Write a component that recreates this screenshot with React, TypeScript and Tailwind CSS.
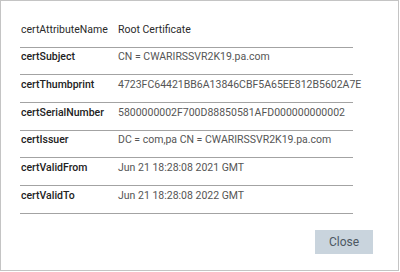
const rows: [string, string][] = [
  ["certSubject", "CN = CWARIRSSVR2K19.pa.com"],
  ["certThumbprint", "4723FC64421BB6A13846CBF5A65EE812B5602A7E"],
  ["certSerialNumber", "5800000002F700D88850581AFD000000000002"],
  ["certIssuer", "DC = com,pa CN = CWARIRSSVR2K19.pa.com"],
  ["certValidFrom", "Jun 21 18:28:08 2021 GMT"],
  ["certValidTo", "Jun 21 18:28:08 2022 GMT"],
];

export default function App() {
  return (
    <div
      className="flex h-[271px] w-[399px] flex-col border border-[#c4c4c4] bg-white"
      style={{ fontFamily: "Roboto, 'Noto Sans', sans-serif" }}
    >
      <div className="ml-[19px] mt-[19px] w-[333px]">
        <div className="flex h-[27.7px] border-b border-[#a3a3a3] pl-px pt-[2px] text-[10.5px] leading-[15px] text-[#2a2a2a]">
          <div className="w-[97px] shrink-0">certAttributeName</div>
          <div className="whitespace-nowrap">Root Certificate</div>
        </div>
        {rows.map(([name, value]) => (
          <div
            key={name}
            className="flex h-[27.7px] border-b border-[#a3a3a3] pl-px pt-[1.5px] text-[10.5px] leading-[15px]"
          >
            <div className="w-[97px] shrink-0 font-medium text-[#222]">{name}</div>
            <div className="whitespace-nowrap text-[#555]">{value}</div>
          </div>
        ))}
      </div>
      <div className="mt-auto mb-[16px] mr-[25px] flex justify-end">
        <button
          type="button"
          className="h-[24px] w-[58px] bg-[#c9d4dd] text-[12px] text-[#4d5862]"
        >
          Close
        </button>
      </div>
    </div>
  );
}
